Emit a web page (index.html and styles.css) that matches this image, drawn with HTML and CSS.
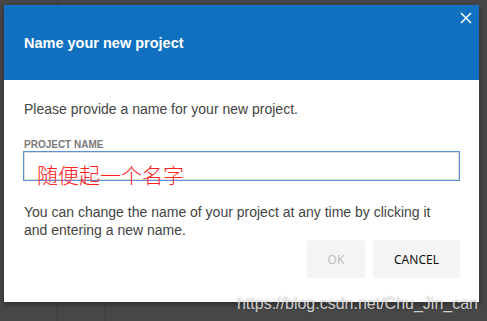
FILE: index.html
```html
<!DOCTYPE html>
<html lang="en">
<head>
    <meta charset="UTF-8">
    <title>Name your new project</title>
    <link rel="stylesheet" href="styles.css">
</head>
<body>
    <div class="backdrop">
        <div class="dialog">
            <div class="dialog-header">
                <h1>Name your new project</h1>
                <button class="close" aria-label="Close">
                    <svg width="12" height="12" viewBox="0 0 12 12">
                        <path d="M1 1 L11 11 M11 1 L1 11" stroke="#fff" stroke-width="1.5" fill="none"/>
                    </svg>
                </button>
            </div>
            <div class="dialog-body">
                <p class="intro">Please provide a name for your new project.</p>
                <label class="field-label">PROJECT NAME</label>
                <div class="field">
                    <input class="field-input" type="text">
                    <span class="note">随便起一个名字</span>
                </div>
                <p class="hint">You can change the name of your project at any time by clicking it and entering a new name.</p>
                <div class="actions">
                    <button class="btn btn-ok" disabled>OK</button>
                    <button class="btn btn-cancel">CANCEL</button>
                </div>
            </div>
        </div>
        <span class="watermark">https://blog.csdn.net/Chu_Jin_can</span>
    </div>
</body>
</html>
```

FILE: styles.css
```css
/* Page backdrop */
body {
    margin: 0;
    background-color: #474747;
    font-family: 'Liberation Sans', Arial, sans-serif;
}

.backdrop {
    position: relative;
    width: 487px;
    height: 321px;
    overflow: hidden;
    background:
        linear-gradient(#3a3a3a, #3a3a3a) 57px 0 / 1px 100% no-repeat,
        linear-gradient(#3c3c3c, #3c3c3c) 105px 290px / 1px 40px no-repeat,
        #474747;
}

/* Dialog */
.dialog {
    position: absolute;
    left: 4px;
    top: 5px;
    width: 475px;
    height: 297px;
    background: #fff;
    box-shadow: 0 2px 6px rgba(0, 0, 0, 0.4);
    display: flex;
    flex-direction: column;
}

.dialog-header {
    position: relative;
    height: 75px;
    background-color: #1170bf;
    display: flex;
    align-items: center;
    padding: 0 20px;
    box-sizing: border-box;
}

.dialog-header h1 {
    margin: 0;
    color: #fff;
    font-size: 14.5px;
    font-weight: bold;
    padding-top: 1px;
}

.close {
    position: absolute;
    top: 6px;
    right: 6px;
    width: 14px;
    height: 14px;
    padding: 0;
    border: none;
    background: none;
    display: flex;
    align-items: center;
    justify-content: center;
}

.dialog-body {
    padding: 20px 19px 0 20px;
    color: #444;
    font-size: 14px;
}

.intro {
    margin: 0 0 21px;
    line-height: 18px;
}

.field-label {
    display: block;
    font-size: 10px;
    font-weight: bold;
    color: #7a7a7a;
    line-height: 12px;
}

.field {
    position: relative;
}

.field-input {
    display: block;
    width: 437px;
    height: 30px;
    margin: 0 0 0 -1px;
    box-sizing: border-box;
    border: 1px solid #5e8fda;
    box-shadow: inset 0 0 0 1px #dcdcdc;
    outline: none;
}

.note {
    position: absolute;
    left: 13px;
    top: 9px;
    color: #ff2020;
    font-size: 21px;
    line-height: 28px;
    font-family: 'Noto Sans CJK SC', sans-serif;
    font-weight: 300;
}

.hint {
    margin: 22px 0 0;
    max-width: 425px;
    line-height: 18px;
}

.actions {
    display: flex;
    justify-content: flex-end;
    gap: 8px;
    margin-top: 1px;
}

.btn {
    height: 38px;
    border: none;
    border-radius: 3px;
    background-color: #f4f4f4;
    font-family: 'Noto Sans', sans-serif;
    font-size: 12px;
}

.btn-ok {
    width: 58px;
    color: #bdbdbd;
}

.btn-cancel {
    width: 87px;
    color: #111;
}

/* Blog watermark */
.watermark {
    position: absolute;
    right: 9px;
    top: 295px;
    font-size: 16px;
    color: rgba(235, 235, 235, 0.85);
    text-shadow: 0 0 2px rgba(0, 0, 0, 0.3);
}
```
